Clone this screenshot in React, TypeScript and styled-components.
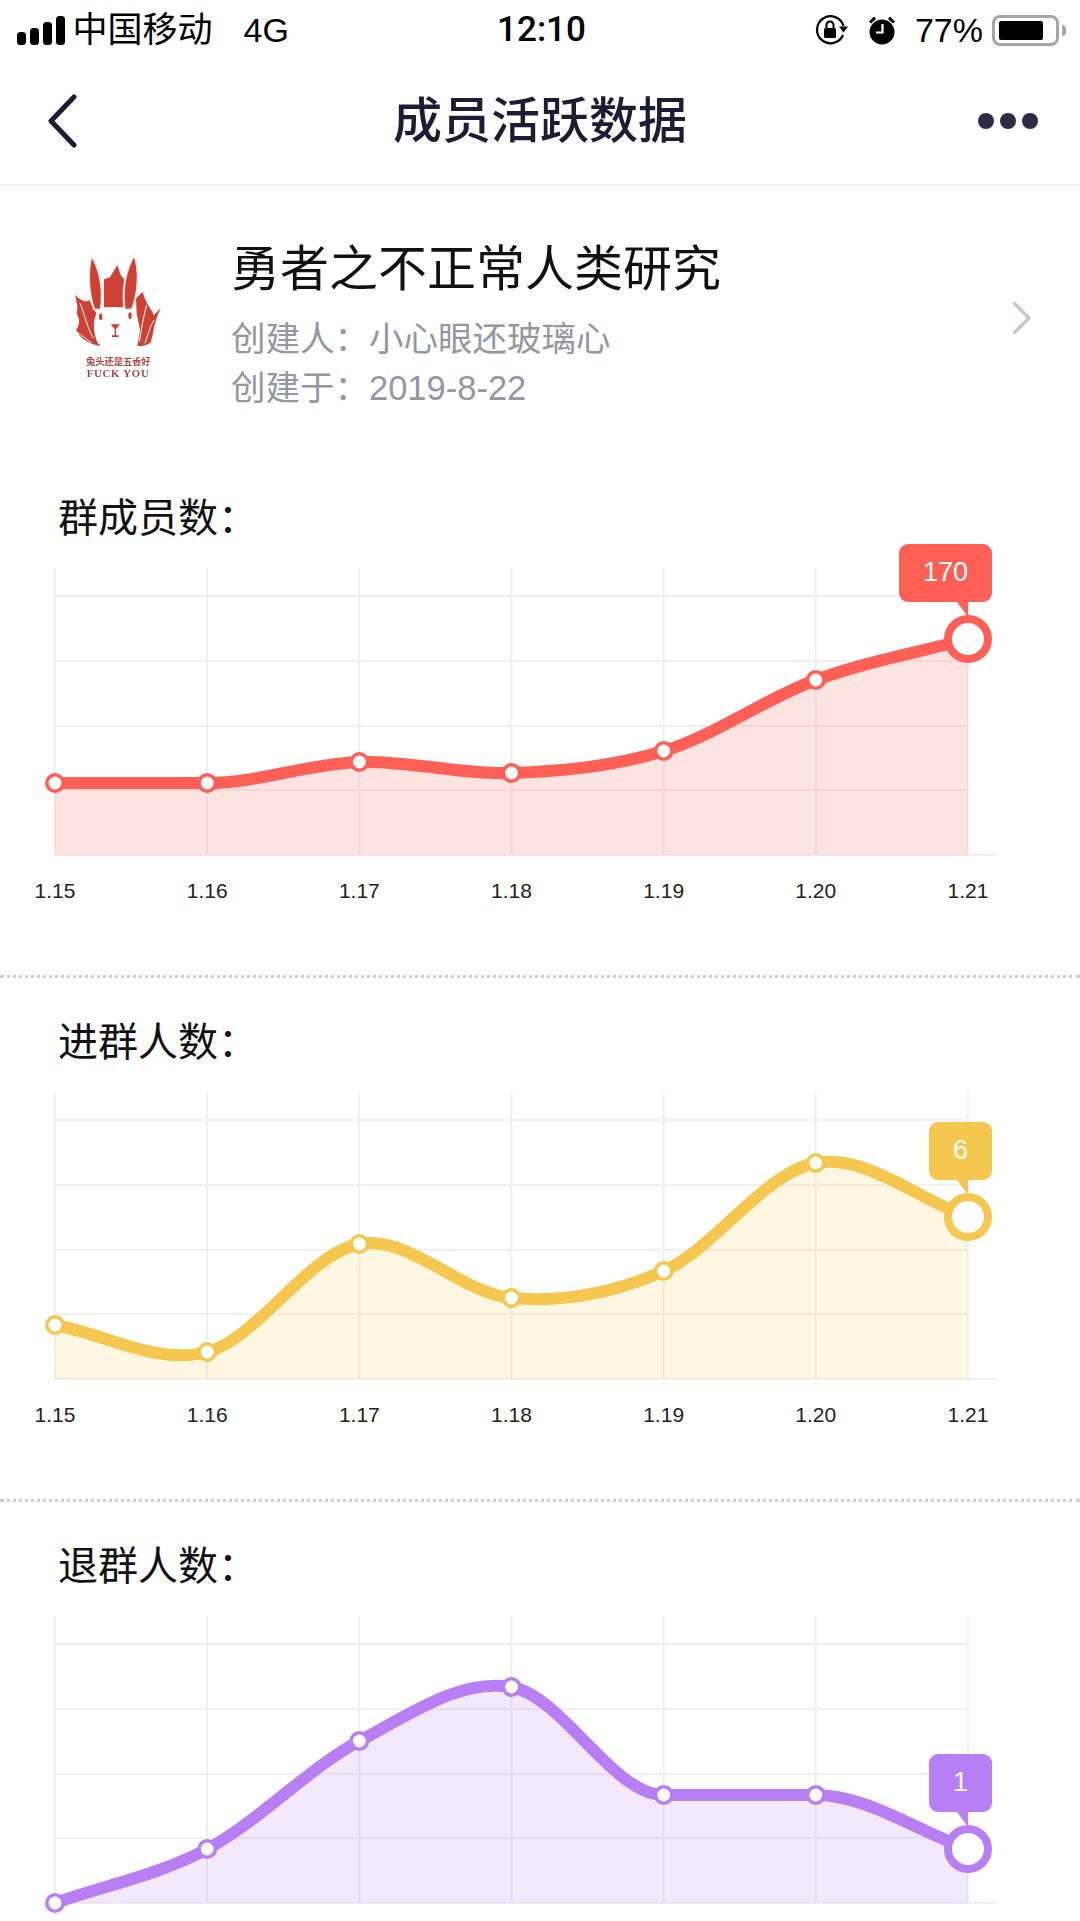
import styled, { createGlobalStyle } from "styled-components";

const CJK = `"Liberation Sans", "Noto Sans CJK SC", sans-serif`;
const AXIS_X = [55, 207.2, 359.4, 511.5, 663.7, 815.8, 968];
const GRID_Y = [28, 93, 158, 222, 287];
const DATES = ["1.15", "1.16", "1.17", "1.18", "1.19", "1.20", "1.21"];
const BASE_Y = 287;

type ChartData = {
  title: string;
  color: string;
  values: number[];
  label: string;
  // the last chart runs off the bottom of the screen before its dates
  showDates: boolean;
};

const CHARTS: ChartData[] = [
  {
    title: "群成员数：",
    color: "#ff5f55",
    values: [215, 215, 194, 205, 183, 112, 71],
    label: "170",
    showDates: true,
  },
  {
    title: "进群人数：",
    color: "#f5c74f",
    values: [233, 260, 152, 206, 179, 71, 125],
    label: "6",
    showDates: true,
  },
  {
    title: "退群人数：",
    color: "#b87ff5",
    values: [287, 233, 125, 71, 179, 179, 233],
    label: "1",
    showDates: false,
  },
];

// catmull-rom through the points; a flat stretch stays flat
function smoothPath(ys: number[]) {
  const n = ys.length;
  const slope = (i: number) => {
    const prev = Math.max(i - 1, 0);
    const next = Math.min(i + 1, n - 1);
    if ((i > 0 && ys[i] === ys[i - 1]) || (i < n - 1 && ys[i] === ys[i + 1])) return 0;
    return (ys[next] - ys[prev]) / (AXIS_X[next] - AXIS_X[prev]);
  };
  let d = `M${AXIS_X[0]} ${ys[0]}`;
  for (let i = 0; i < n - 1; i++) {
    const dx = (AXIS_X[i + 1] - AXIS_X[i]) / 3;
    d += ` C${AXIS_X[i] + dx} ${ys[i] + slope(i) * dx} ${AXIS_X[i + 1] - dx} ${
      ys[i + 1] - slope(i + 1) * dx
    } ${AXIS_X[i + 1]} ${ys[i + 1]}`;
  }
  return d;
}

function LineChart({ color, values, label }: ChartData) {
  const line = smoothPath(values);
  const last = values.length - 1;
  return (
    <ChartBox>
      <ChartSvg width={1080} height={288} viewBox="0 0 1080 288">
        {AXIS_X.map((x) => (
          <line key={x} x1={x} x2={x} y1={0} y2={BASE_Y} stroke="#ededef" strokeWidth={1.5} />
        ))}
        {GRID_Y.map((y) => (
          <line
            key={y}
            x1={AXIS_X[0]}
            x2={y === BASE_Y ? 997 : AXIS_X[last]}
            y1={y}
            y2={y}
            stroke="#f0f0f1"
            strokeWidth={2}
          />
        ))}
        <path
          d={`${line} L${AXIS_X[last]} ${BASE_Y} L${AXIS_X[0]} ${BASE_Y} Z`}
          fill={color}
          fillOpacity={0.17}
        />
        <path d={line} fill="none" stroke={color} strokeWidth={12} />
        {values.slice(0, last).map((y, i) => (
          <circle key={i} cx={AXIS_X[i]} cy={y} r={8.2} fill="#fff" stroke={color} strokeWidth={3.6} />
        ))}
        <circle cx={AXIS_X[last]} cy={values[last]} r={20} fill="#fff" stroke={color} strokeWidth={8} />
      </ChartSvg>
      <Bubble $color={color} $top={values[last] - 95}>
        {label}
      </Bubble>
    </ChartBox>
  );
}

export default function App() {
  return (
    <Page>
      <GlobalStyle />
      <StatusBar>
        <StatusLeft>
          <SignalBars>
            <Bar $h={13} />
            <Bar $h={17} />
            <Bar $h={23} />
            <Bar $h={29} />
          </SignalBars>
          <Carrier>中国移动</Carrier>
          <Network>4G</Network>
        </StatusLeft>
        <Clock>12:10</Clock>
        <StatusRight>
          <svg width="34" height="32" viewBox="0 0 34 32">
            <path
              d="M28.5 12A13.5 13.5 0 1 0 28 21"
              fill="none"
              stroke="#000"
              strokeWidth="2.2"
            />
            <path d="M24 12.5h9l-4.5 6z" fill="#000" />
            <rect x="9" y="14" width="12" height="10" rx="1.5" fill="#000" />
            <path d="M11.5 14v-3a3.5 3.5 0 0 1 7 0v3" fill="none" stroke="#000" strokeWidth="2" />
          </svg>
          <AlarmIcon width="28" height="30" viewBox="0 0 28 30">
            <circle cx="14" cy="17" r="12.5" fill="#000" />
            <path d="M14.5 9v8.5H8" fill="none" stroke="#fff" strokeWidth="2.2" />
            <path d="M1 6.5 6 1.5 8 4 3 8.5zM27 6.5l-5-5L20 4l5 4.5z" fill="#000" />
          </AlarmIcon>
          <Percent>77%</Percent>
          <Battery>
            <BatteryLevel />
          </Battery>
          <BatteryTip />
        </StatusRight>
      </StatusBar>

      <NavBar>
        <BackIcon width="30" height="54" viewBox="0 0 30 54">
          <path
            d="M26 3 3 27l23 24"
            fill="none"
            stroke="#1a1d33"
            strokeWidth="5"
            strokeLinecap="round"
            strokeLinejoin="round"
          />
        </BackIcon>
        <NavTitle>成员活跃数据</NavTitle>
        <MoreDots>
          <Dot />
          <Dot />
          <Dot />
        </MoreDots>
      </NavBar>

      <Profile>
        <Logo width="160" height="180" viewBox="0 0 480 540">
          <g fill="#cf4034">
            <path d="M135 225C150 240 168 250 178 240L190 265 205 290 196 340 210 378C175 372 150 355 138 330 150 315 150 300 140 280 145 262 140 245 135 225Z" />
            <path d="M222 178 240 172 262 135 272 165 292 190 280 262H222Z" />
            <path d="M318 235 338 215C345 245 360 262 372 285L392 265C380 290 372 315 368 345L362 368C345 378 335 378 322 378L330 330 320 280Z" />
          </g>
          <g fill="none" stroke="#fff" strokeWidth="3">
            <path d="M150 250C165 285 170 320 190 355M140 335C155 345 170 360 185 368" />
            <path d="M350 255C340 290 335 325 328 365M372 300C360 320 355 340 345 370" />
          </g>
          <g fill="#cf4034" stroke="#fbeeec" strokeWidth="6">
            <path d="M185 107C210 150 222 210 212 270L192 268C175 220 172 150 185 107Z" />
            <path d="M312 105C288 150 275 210 284 270L306 268C325 220 330 150 312 105Z" />
          </g>
          <path
            d="M205 272C235 258 275 258 300 272 325 295 330 345 312 372 280 365 240 365 205 372 190 345 185 295 205 272Z"
            fill="#fff"
          />
          <g fill="#cf4034">
            <ellipse cx="212" cy="290" rx="5" ry="10" />
            <ellipse cx="300" cy="287" rx="5" ry="10" />
            <path d="M242 313h28l-14 17z" />
            <path d="M254 328h4v18h8v5h-20v-5h8z" />
          </g>
          <LogoCaption x="168" y="436" fontSize="28" textLength="194">
            兔头还是五香好
          </LogoCaption>
          <LogoSlogan x="170" y="470" fontSize="32" textLength="186">
            FUCK YOU
          </LogoSlogan>
        </Logo>
        <ProfileInfo>
          <GroupName>勇者之不正常人类研究</GroupName>
          <GroupMeta>创建人：小心眼还玻璃心</GroupMeta>
          <GroupMeta>创建于：2019-8-22</GroupMeta>
        </ProfileInfo>
        <ProfileArrow width="20" height="34" viewBox="0 0 20 34">
          <path
            d="M2.5 2.5 17 17 2.5 31.5"
            fill="none"
            stroke="#c6c8cf"
            strokeWidth="3.5"
            strokeLinecap="round"
            strokeLinejoin="round"
          />
        </ProfileArrow>
      </Profile>

      {CHARTS.map((chart) => (
        <Section key={chart.title}>
          <SectionTitle>{chart.title}</SectionTitle>
          <LineChart {...chart} />
          {chart.showDates && (
            <Ticks>
              {DATES.map((date) => (
                <Tick key={date}>{date}</Tick>
              ))}
            </Ticks>
          )}
        </Section>
      ))}
    </Page>
  );
}

const GlobalStyle = createGlobalStyle`
  html, body {
    margin: 0;
    padding: 0;
    background: #fff;
  }
`;

const Page = styled.div`
  width: 1080px;
  height: 1921px;
  overflow: hidden;
  background: #fff;
  font-family: ${CJK};
`;

const StatusBar = styled.div`
  box-sizing: border-box;
  height: 56px;
  padding: 4px 14px 0 17px;
  display: grid;
  grid-template-columns: 1fr auto 1fr;
  align-items: center;
  color: #000;
`;

const StatusLeft = styled.div`
  display: flex;
  align-items: center;
`;

const SignalBars = styled.div`
  display: flex;
  align-items: flex-end;
  gap: 4.5px;
  height: 29px;
`;

const Bar = styled.span<{ $h: number }>`
  width: 8.5px;
  height: ${(p) => p.$h}px;
  border-radius: 3.5px;
  background: #000;
`;

const Carrier = styled.span`
  margin-left: 8px;
  font-size: 35px;
  line-height: 52px;
`;

const Network = styled.span`
  margin-left: 31px;
  font-size: 34px;
  line-height: 52px;
`;

const Clock = styled.span`
  font-family: Roboto, sans-serif;
  font-weight: 500;
  font-size: 35px;
  line-height: 52px;
`;

const StatusRight = styled.div`
  display: flex;
  align-items: center;
  justify-content: flex-end;
`;

const AlarmIcon = styled.svg`
  margin-left: 19px;
`;

const Percent = styled.span`
  margin-left: 19px;
  font-size: 34px;
  line-height: 52px;
`;

const Battery = styled.div`
  box-sizing: border-box;
  width: 67px;
  height: 31px;
  margin-left: 9px;
  padding: 3px 4px;
  border: 3px solid #a6a6a6;
  border-radius: 8px;
`;

const BatteryLevel = styled.div`
  width: 44px;
  height: 100%;
  background: #000;
  border-radius: 2px;
`;

const BatteryTip = styled.div`
  width: 4px;
  height: 11px;
  margin-left: 3px;
  background: #a6a6a6;
  border-radius: 0 4px 4px 0;
`;

const NavBar = styled.div`
  box-sizing: border-box;
  height: 130px;
  padding: 2px 42px 0;
  display: grid;
  grid-template-columns: 1fr auto 1fr;
  align-items: center;
  border-bottom: 2px solid #f3f3f4;
`;

const BackIcon = styled.svg`
  margin-left: 6px;
`;

const NavTitle = styled.h1`
  margin: 0;
  font-size: 49px;
  font-weight: 500;
  line-height: 60px;
  color: #1a1d33;
`;

const MoreDots = styled.div`
  display: flex;
  justify-content: flex-end;
  gap: 6px;
`;

const Dot = styled.span`
  width: 16px;
  height: 16px;
  border-radius: 50%;
  background: #2a2d45;
`;

const Profile = styled.div`
  box-sizing: border-box;
  height: 304px;
  padding: 34px 48px 0 30px;
  display: flex;
  align-items: flex-start;
`;

const Logo = styled.svg`
  flex: none;
  filter: blur(0.4px);
`;

const LogoCaption = styled.text`
  font-family: "Noto Sans CJK SC", serif;
  font-weight: 700;
  fill: #b8453c;
`;

const LogoSlogan = styled.text`
  font-family: "Liberation Serif", serif;
  font-weight: 700;
  fill: #a8443c;
`;

const ProfileInfo = styled.div`
  margin-left: 41px;
  padding-top: 21px;
`;

const GroupName = styled.div`
  font-size: 49px;
  line-height: 56px;
  color: #111;
  margin-bottom: 18px;
`;

const GroupMeta = styled.div`
  font-size: 34.5px;
  line-height: 49px;
  color: #9396a3;
`;

const ProfileArrow = styled.svg`
  margin-left: auto;
  margin-top: 81px;
`;

const Section = styled.section`
  height: 416px;
  padding-bottom: 69px;
  border-bottom: 3px dotted #cfcfcf;
  margin-bottom: 36px;
  &:last-child {
    border-bottom: 0;
  }
`;

const SectionTitle = styled.h2`
  margin: 0 0 22px;
  padding-left: 58px;
  font-size: 40px;
  font-weight: 400;
  line-height: 56px;
  color: #111;
`;

const ChartBox = styled.div`
  position: relative;
  height: 288px;
`;

const ChartSvg = styled.svg`
  display: block;
  overflow: visible;
`;

const Bubble = styled.div<{ $color: string; $top: number }>`
  position: absolute;
  right: 88px;
  top: ${(p) => p.$top}px;
  box-sizing: border-box;
  min-width: 62px;
  height: 58px;
  padding: 0 24px;
  border-radius: 9px;
  background: ${(p) => p.$color};
  color: #fff;
  font-size: 27px;
  line-height: 56px;
  text-align: center;

  &::after {
    content: "";
    position: absolute;
    right: 24px;
    top: 100%;
    width: 11px;
    height: 15px;
    background: ${(p) => p.$color};
    clip-path: polygon(0 0, 100% 0, 100% 100%);
  }
`;

const Ticks = styled.div`
  margin-top: 20px;
  padding: 0 112px 0 55px;
  display: flex;
  justify-content: space-between;
`;

const Tick = styled.span`
  width: 0;
  display: flex;
  justify-content: center;
  white-space: nowrap;
  font-size: 21px;
  line-height: 30px;
  color: #222;
`;
